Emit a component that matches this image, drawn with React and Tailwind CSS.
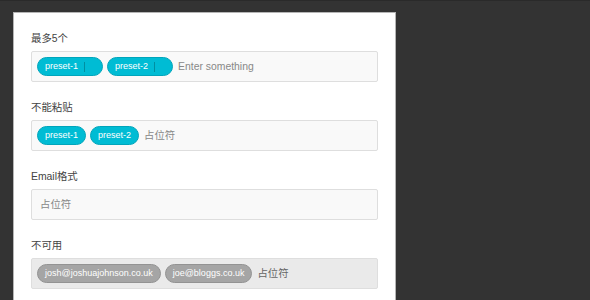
import React from "react";

const font = { fontFamily: '"Liberation Sans", Arial, "Noto Sans CJK SC", sans-serif' };

function Tag({ children, removable, disabled }) {
  const base = disabled
    ? "bg-[#a5a5a5] border-[#939393]"
    : "bg-[#00bcd4] border-[#00a5bb]";
  return (
    <span
      className={`inline-flex items-center h-[19px] rounded-full border ${base} text-white text-[9px] leading-none shrink-0 pl-[7px] ${removable ? "pr-0" : "pr-[7px]"}`}
    >
      <span>{children}</span>
      {removable && <span className="ml-[6px] mr-[17px] w-px h-[10px] bg-[#008fa1]" />}
    </span>
  );
}

function Field({ label, tags = [], removable, disabled, placeholder, padLeft = "pl-[5px]" }) {
  return (
    <div className="flex flex-col">
      <div className="h-[16px] leading-[16px] text-[10.4px] text-[#444] mb-[4px]">{label}</div>
      <div
        className={`h-[31px] flex items-center gap-[4px] border border-[#dedede] rounded-[2px] ${padLeft} ${disabled ? "bg-[#eaeaea]" : "bg-[#f9f9f9]"}`}
      >
        {tags.map((t) => (
          <Tag key={t} removable={removable} disabled={disabled}>
            {t}
          </Tag>
        ))}
        <span className={`text-[10.4px] ml-[1px] ${disabled ? "text-[#666]" : "text-[#888]"}`}>{placeholder}</span>
      </div>
    </div>
  );
}

export default function App() {
  return (
    <div style={font} className="w-[590px] h-[300px] overflow-hidden bg-[#333333] border-t border-[#2a2a2a] pt-[11px] pl-[13px]">
      <div className="w-[383px] h-[300px] bg-white border-l border-r border-t border-[#b5b5b5] pt-[18px] px-[17px] flex flex-col gap-[18px]">
        <Field label="最多5个" tags={["preset-1", "preset-2"]} removable placeholder="Enter something" />
        <Field label="不能粘贴" tags={["preset-1", "preset-2"]} placeholder="占位符" />
        <Field label="Email格式" placeholder="占位符" padLeft="pl-[7px]" />
        <Field
          label="不可用"
          tags={["josh@joshuajohnson.co.uk", "joe@bloggs.co.uk"]}
          disabled
          placeholder="占位符"
        />
      </div>
    </div>
  );
}
